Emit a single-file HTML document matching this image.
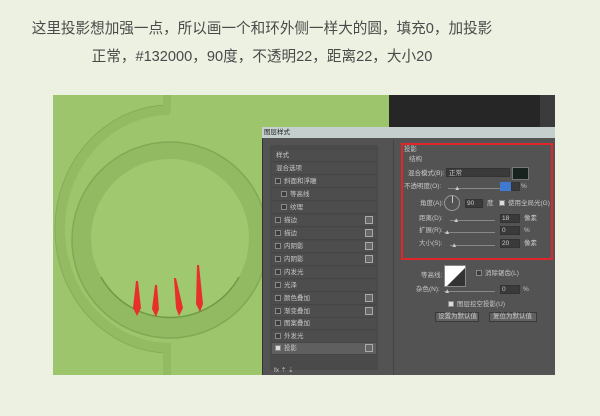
<!DOCTYPE html>
<html><head><meta charset="utf-8"><style>
*{margin:0;padding:0;box-sizing:border-box}
body{width:600px;height:416px;background:#ecf1e1;position:relative;overflow:hidden;font-family:"Liberation Sans","Noto Sans CJK SC",sans-serif}
.t{position:absolute;left:0;width:524px;text-align:center;font-size:14.6px;color:#4a4a4a;white-space:nowrap}
.a{position:absolute}
.s{position:absolute;font-size:6.5px;color:#c8c8c8;white-space:nowrap;line-height:8px}
.row{position:absolute;left:272px;width:104px;height:12px;background:#4d4d4d;border-bottom:1px solid #454545}
.cb{position:absolute;width:6px;height:6px;border:1px solid #888;background:#3c3c3c}
.pl{position:absolute;left:365px;width:8px;height:8px;border:1px solid #aaa;background:#666}
.sl{position:absolute;height:1px;background:#888}
.in{position:absolute;height:9px;background:#3a3a3a;border:1px solid #333}
</style></head><body>
<div class="t" style="top:17px">这里投影想加强一点，所以画一个和环外侧一样大的圆，填充0，加投影</div>
<div class="t" style="top:45px">正常，#132000，90度，不透明22，距离22，大小20</div>

<div class="a" style="left:53px;top:95px;width:502px;height:280px;background:#9dc56b;overflow:hidden">
<svg width="502" height="280" style="position:absolute;left:0;top:0">
<ellipse cx="117" cy="134" rx="110" ry="119" fill="none" stroke="#92bb62" stroke-width="10"/>
<ellipse cx="117" cy="134" rx="115" ry="124" fill="none" stroke="#86ad57" stroke-width="1"/>
<rect x="117" y="0" width="120" height="280" fill="#9dc56b"/>
<rect x="110" y="0" width="8" height="16" fill="#92bb62"/>
<rect x="110" y="248" width="8" height="32" fill="#92bb62"/>
<circle cx="117" cy="145" r="98" fill="#92ba62"/>
<circle cx="117" cy="145" r="98" fill="none" stroke="#82a954" stroke-width="1.5"/>
<circle cx="117" cy="143" r="79" fill="#a0c86e"/>
<path d="M48 182 A79 79 0 0 0 186 182" fill="none" stroke="#6f9a45" stroke-width="1.5"/>
<g fill="#e8302a">
<path d="M83 186 L85 186 L88 213 L84 221 L80 213 Z"/>
<path d="M102 190 L104 190 L106 214 L103 222 L99 214 Z"/>
<path d="M121 183 L123 183 L130 213 L126 221 L123 213 Z"/>
<path d="M144 170 L146 170 L150 209 L147 217 L143 209 Z"/>
</g>
</svg>
<div class="a" style="left:336px;top:0;width:166px;height:34px;background:#262626"></div>
<div class="a" style="left:487px;top:0;width:15px;height:34px;background:#3b3b3b"></div>
<div class="a" style="left:336px;top:32px;width:166px;height:10px;background:#5a6e70"></div>
</div>

<div class="a" style="left:262px;top:127px;width:293px;height:248px;background:#535353;border-left:1px solid #333"></div>
<div class="a" style="left:262px;top:127px;width:293px;height:11px;background:#c5cfcd"></div>
<div class="s" style="left:264px;top:129px;color:#222">图层样式</div>
<div class="a" style="left:270px;top:145px;width:108px;height:225px;background:#4a4a4a"></div>
<div class="a" style="left:393px;top:140px;width:1px;height:235px;background:#444"></div>

<div class="row" style="top:150px"></div><div class="s" style="left:276px;top:152px">样式</div>
<div class="row" style="top:163px"></div><div class="s" style="left:276px;top:165px">混合选项</div>
<div class="row" style="top:176px"></div><div class="cb" style="left:275px;top:178px"></div><div class="s" style="left:284px;top:178px">斜面和浮雕</div>
<div class="row" style="top:189px"></div><div class="cb" style="left:281px;top:191px"></div><div class="s" style="left:290px;top:191px">等高线</div>
<div class="row" style="top:202px"></div><div class="cb" style="left:281px;top:204px"></div><div class="s" style="left:290px;top:204px">纹理</div>
<div class="row" style="top:215px"></div><div class="cb" style="left:275px;top:217px"></div><div class="s" style="left:284px;top:217px">描边</div><div class="pl" style="top:216px"></div>
<div class="row" style="top:228px"></div><div class="cb" style="left:275px;top:230px"></div><div class="s" style="left:284px;top:230px">描边</div><div class="pl" style="top:229px"></div>
<div class="row" style="top:241px"></div><div class="cb" style="left:275px;top:243px"></div><div class="s" style="left:284px;top:243px">内阴影</div><div class="pl" style="top:242px"></div>
<div class="row" style="top:254px"></div><div class="cb" style="left:275px;top:256px"></div><div class="s" style="left:284px;top:256px">内阴影</div><div class="pl" style="top:255px"></div>
<div class="row" style="top:267px"></div><div class="cb" style="left:275px;top:269px"></div><div class="s" style="left:284px;top:269px">内发光</div>
<div class="row" style="top:280px"></div><div class="cb" style="left:275px;top:282px"></div><div class="s" style="left:284px;top:282px">光泽</div>
<div class="row" style="top:293px"></div><div class="cb" style="left:275px;top:295px"></div><div class="s" style="left:284px;top:295px">颜色叠加</div><div class="pl" style="top:294px"></div>
<div class="row" style="top:306px"></div><div class="cb" style="left:275px;top:308px"></div><div class="s" style="left:284px;top:308px">渐变叠加</div><div class="pl" style="top:307px"></div>
<div class="row" style="top:318px"></div><div class="cb" style="left:275px;top:320px"></div><div class="s" style="left:284px;top:320px">图案叠加</div>
<div class="row" style="top:331px"></div><div class="cb" style="left:275px;top:333px"></div><div class="s" style="left:284px;top:333px">外发光</div>
<div class="row" style="top:343px;background:#5f5f5f"></div><div class="cb" style="left:275px;top:345px;background:#ddd"></div><div class="s" style="left:284px;top:345px">投影</div><div class="pl" style="top:344px"></div>
<div class="s" style="left:274px;top:367px">fx ⇡ ⇣</div>

<div class="a" style="left:401px;top:143px;width:152px;height:117px;border:2.5px solid #e0262a"></div>
<div class="s" style="left:404px;top:146px">投影</div>
<div class="s" style="left:409px;top:156px">结构</div>
<div class="s" style="left:408px;top:170px">混合模式(B):</div>
<div class="in" style="left:446px;top:168px;width:64px"></div><div class="s" style="left:449px;top:170px">正常</div>
<div class="a" style="left:512px;top:167px;width:17px;height:13px;background:#18221f;border:1px solid #777"></div>
<div class="s" style="left:404px;top:183px">不透明度(O):</div>
<div class="sl" style="left:448px;top:188px;width:52px"></div><div class="s" style="left:454px;top:185px">▲</div>
<div class="a" style="left:500px;top:182px;width:11px;height:9px;background:#3f7ad0"></div>
<div class="in" style="left:511px;top:182px;width:9px"></div><div class="s" style="left:521px;top:183px">%</div>
<div class="s" style="left:420px;top:200px">角度(A):</div>
<div class="a" style="left:444px;top:195px;width:16px;height:16px;border:1px solid #999;border-radius:50%"></div>
<div class="a" style="left:452px;top:196px;width:1px;height:7px;background:#ccc"></div>
<div class="in" style="left:465px;top:199px;width:18px"></div><div class="s" style="left:467px;top:200px">90</div>
<div class="s" style="left:487px;top:200px">度</div>
<div class="cb" style="left:499px;top:200px;background:#ddd"></div>
<div class="s" style="left:508px;top:200px">使用全局光(G)</div>
<div class="s" style="left:419px;top:215px">距离(D):</div>
<div class="sl" style="left:450px;top:220px;width:45px"></div><div class="s" style="left:453px;top:217px">▲</div>
<div class="in" style="left:500px;top:214px;width:20px"></div><div class="s" style="left:502px;top:215px">18</div><div class="s" style="left:524px;top:215px">像素</div>
<div class="s" style="left:419px;top:227px">扩展(R):</div>
<div class="sl" style="left:444px;top:232px;width:51px"></div><div class="s" style="left:444px;top:229px">▲</div>
<div class="in" style="left:500px;top:226px;width:20px"></div><div class="s" style="left:502px;top:227px">0</div><div class="s" style="left:524px;top:227px">%</div>
<div class="s" style="left:419px;top:240px">大小(S):</div>
<div class="sl" style="left:450px;top:245px;width:45px"></div><div class="s" style="left:451px;top:242px">▲</div>
<div class="in" style="left:500px;top:239px;width:20px"></div><div class="s" style="left:502px;top:240px">20</div><div class="s" style="left:524px;top:240px">像素</div>

<div class="s" style="left:421px;top:272px">等高线:</div>
<div class="a" style="left:444px;top:265px;width:22px;height:22px;background:#fff;border:1px solid #888;overflow:hidden"><svg width="22" height="22" style="position:absolute;left:0;top:0"><path d="M22 0 L22 22 L0 22 Z" fill="#333"/></svg></div>
<div class="cb" style="left:476px;top:270px"></div><div class="s" style="left:485px;top:270px">消除锯齿(L)</div>
<div class="s" style="left:416px;top:286px">杂色(N):</div>
<div class="sl" style="left:444px;top:291px;width:51px"></div><div class="s" style="left:444px;top:288px">▲</div>
<div class="in" style="left:500px;top:285px;width:20px"></div><div class="s" style="left:502px;top:286px">0</div><div class="s" style="left:523px;top:286px">%</div>
<div class="cb" style="left:448px;top:301px;background:#ddd"></div><div class="s" style="left:457px;top:301px">图层挖空投影(U)</div>
<div class="a" style="left:435px;top:312px;width:44px;height:10px;background:#606060;border:1px solid #3a3a3a"></div><div class="s" style="left:438px;top:313px">设置为默认值</div>
<div class="a" style="left:489px;top:312px;width:48px;height:10px;background:#606060;border:1px solid #3a3a3a"></div><div class="s" style="left:493px;top:313px">复位为默认值</div>
</body></html>
